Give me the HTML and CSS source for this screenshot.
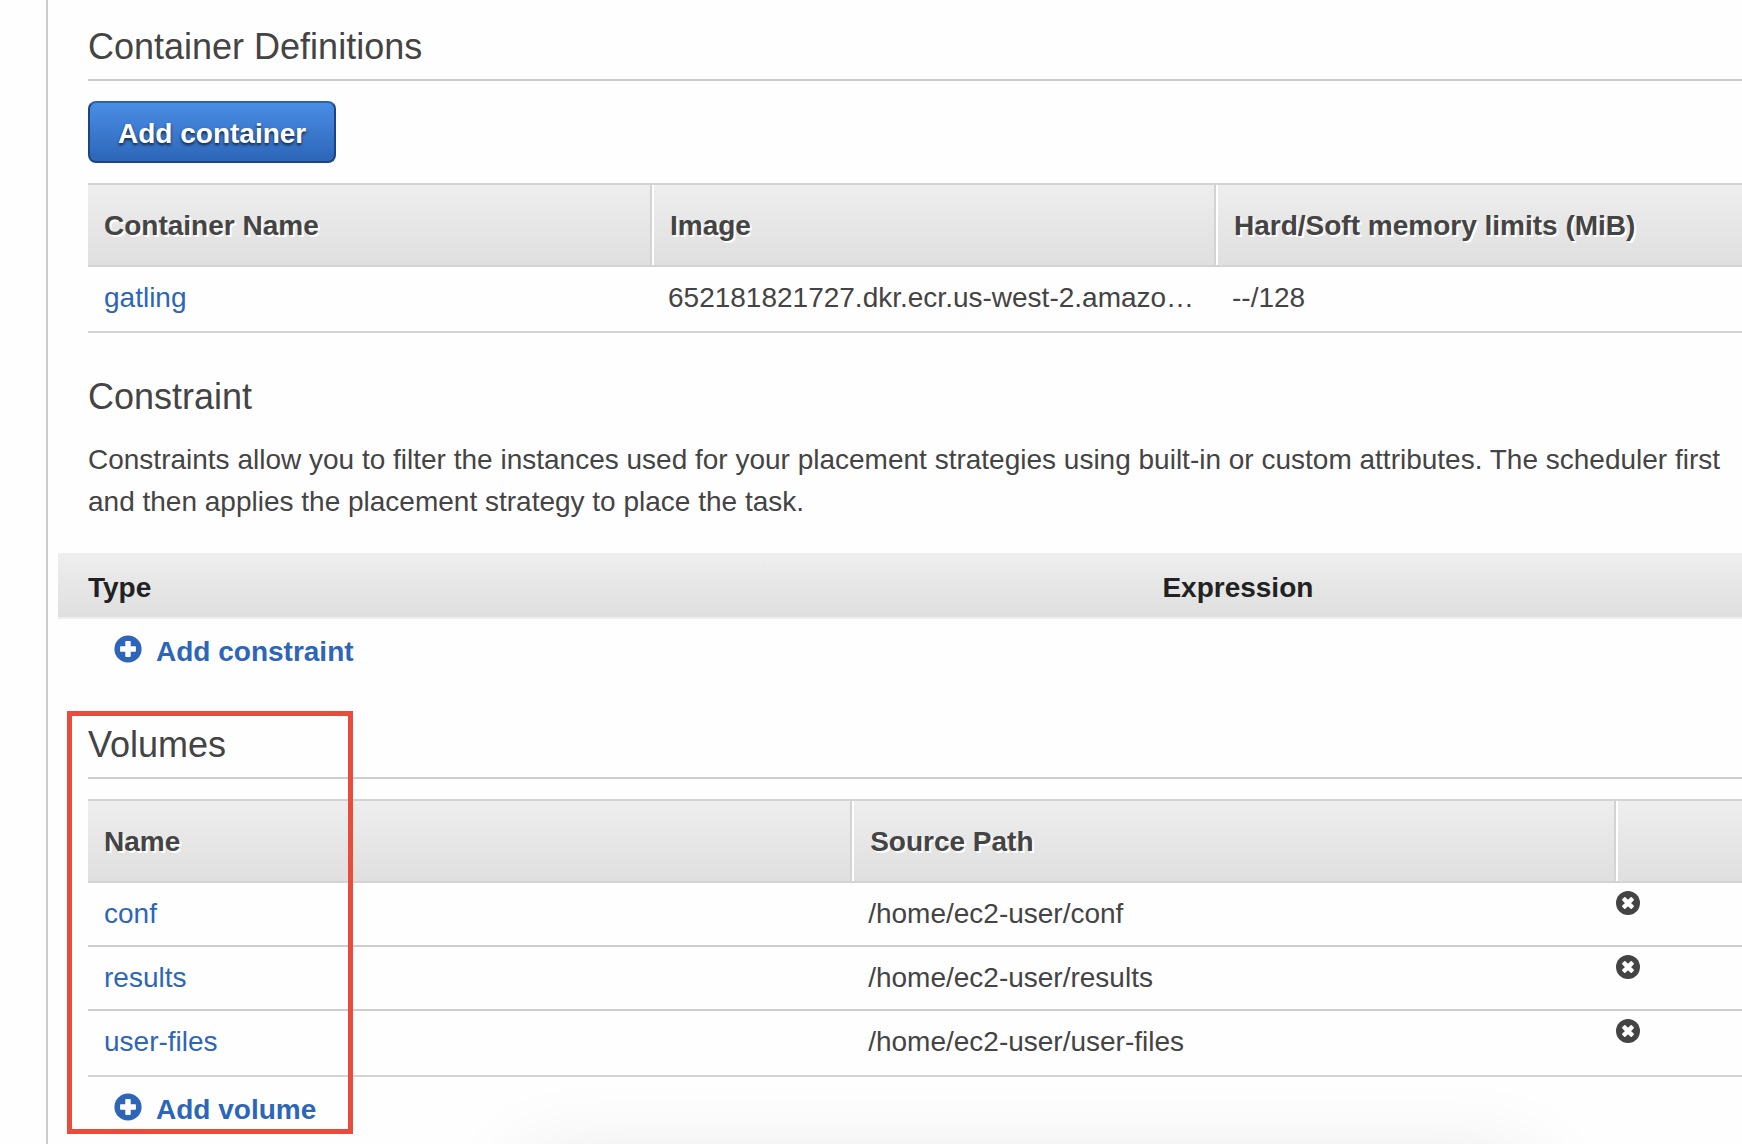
FILE: index.html
```html
<!DOCTYPE html>
<html lang="en">
<head>
<meta charset="utf-8">
<title>Task Definition</title>
<link rel="stylesheet" href="styles.css">
</head>
<body>
<svg class="sprite" aria-hidden="true">
  <symbol id="icon-plus" viewBox="0 0 28 28">
    <circle cx="14" cy="14" r="13.6" fill="currentColor"/>
    <path d="M12 6.8h4v5.2h5.2v4H16v5.2h-4V16H6.800v-4H12z" fill="#fff" stroke="#fff" stroke-width="1.4" stroke-linejoin="round"/>
  </symbol>
  <symbol id="icon-remove" viewBox="0 0 24 24">
    <circle cx="12" cy="12" r="12" fill="currentColor"/>
    <path d="M8.800 6.800l3.200 3 3.200-3 2 2-3 3.200 3 3.200-2 2-3.200-3-3.200 3-2-2 3-3.200-3-3.200z" fill="#fff" stroke="#fff" stroke-width="1.6" stroke-linejoin="round"/>
  </symbol>
</svg>
<main class="panel">
  <section>
    <h2 class="heading heading-ruled">Container Definitions</h2>
    <button type="button" class="primary">Add container</button>
    <table class="grid containers">
      <thead>
        <tr><th scope="col">Container Name</th><th scope="col">Image</th><th scope="col">Hard/Soft memory limits (MiB)</th></tr>
      </thead>
      <tbody>
        <tr><td><a href="#gatling">gatling</a></td><td>652181821727.dkr.ecr.us-west-2.amazo…</td><td>--/128</td></tr>
      </tbody>
    </table>
  </section>

  <section class="constraint">
    <h2 class="heading">Constraint</h2>
    <p class="description">Constraints allow you to filter the instances used for your placement strategies using built-in or custom attributes. The scheduler first<br>and then applies the placement strategy to place the task.</p>
    <table class="band">
      <thead>
        <tr><th scope="col">Type</th><th scope="col">Expression</th></tr>
      </thead>
    </table>
    <a class="add" href="#add-constraint"><svg class="icon-plus" aria-hidden="true"><use href="#icon-plus"/></svg>Add constraint</a>
  </section>

  <section class="volumes">
    <h2 class="heading heading-ruled">Volumes</h2>
    <table class="grid paths">
      <thead>
        <tr><th scope="col">Name</th><th scope="col">Source Path</th><th></th></tr>
      </thead>
      <tbody>
        <tr><td><a href="#conf">conf</a></td><td>/home/ec2-user/conf</td><td class="action"><button type="button" class="remove" aria-label="Remove conf"><svg aria-hidden="true"><use href="#icon-remove"/></svg></button></td></tr>
        <tr><td><a href="#results">results</a></td><td>/home/ec2-user/results</td><td class="action"><button type="button" class="remove" aria-label="Remove results"><svg aria-hidden="true"><use href="#icon-remove"/></svg></button></td></tr>
        <tr><td><a href="#user-files">user-files</a></td><td>/home/ec2-user/user-files</td><td class="action"><button type="button" class="remove" aria-label="Remove user-files"><svg aria-hidden="true"><use href="#icon-remove"/></svg></button></td></tr>
      </tbody>
    </table>
    <a class="add" href="#add-volume"><svg class="icon-plus" aria-hidden="true"><use href="#icon-plus"/></svg>Add volume</a>
    <div class="highlight"></div>
  </section>
</main>
</body>
</html>
```

FILE: styles.css
```css
* {
  box-sizing: border-box;
}

body {
  margin: 0;
  background: #fefefe;
  color: #444;
  font: 28px/42px "Liberation Sans", Arial, sans-serif;
}

/* Soft shadow of the dialog docked under the window's lower edge */
body::after {
  content: "";
  position: fixed;
  top: 100%;
  left: 30%;
  right: 12%;
  height: 200px;
  border-radius: 12px;
  box-shadow: 0 20px 90px rgba(0, 0, 0, 0.11);
}

a {
  color: #2d66b8;
  text-decoration: none;
}

.sprite {
  display: none;
}

.panel {
  min-height: 100vh;
  margin-left: 46px;
  padding: 25px 0 13px 40px;
  border-left: 2px solid #ccc;
  overflow: hidden;
}

.heading {
  margin: 0;
  font-size: 36px;
  font-weight: 400;
  line-height: 44px;
}

.heading-ruled {
  margin-bottom: 20px;
  padding-bottom: 10px;
  border-bottom: 2px solid #ccc;
}

.primary {
  display: block;
  height: 62px;
  margin-bottom: 20px;
  padding: 3px 28px 0;
  border: 2px solid #1c4481;
  border-top-color: #2a62b4;
  border-radius: 8px;
  background: linear-gradient(#4a8de5, #2d66b8);
  color: #fff;
  font: inherit;
  font-weight: 700;
  text-shadow: 0 2px 3px rgba(0, 0, 0, 0.7);
}

.grid,
.band {
  width: 100%;
  table-layout: fixed;
  border-collapse: separate;
  border-spacing: 0;
  text-align: left;
}

/* Column dividers are background strips, so they meet the borders squarely */
.grid th {
  padding: 20px 16px 18px 18px;
  border: solid #d3d3d3;
  border-width: 2px 0;
  background:
    linear-gradient(#fff, #fff) left / 2px 100% no-repeat padding-box,
    linear-gradient(#d3d3d3, #d3d3d3) right / 2px 100% no-repeat padding-box,
    linear-gradient(#eee, #dfdfdf) padding-box;
  text-shadow: 2px 2px 0 #fff;
  white-space: nowrap;
}

.grid th:first-child {
  padding-left: 16px;
  background:
    linear-gradient(#d3d3d3, #d3d3d3) right / 2px 100% no-repeat padding-box,
    linear-gradient(#eee, #dfdfdf) padding-box;
}

.grid th:last-child {
  background:
    linear-gradient(#fff, #fff) left / 2px 100% no-repeat padding-box,
    linear-gradient(#eee, #dfdfdf) padding-box;
}

.grid td {
  padding: 10px 16px;
  border-bottom: 2px solid #ccc;
  vertical-align: top;
  white-space: nowrap;
}

.grid tr:last-child td {
  padding-bottom: 12px;
  border-bottom-color: #d3d3d3;
}

.containers th:not(:last-child) {
  width: 34.1%;
}

.paths th:not(:last-child) {
  width: 46.2%;
}

.grid .action {
  padding: 8px 0 0;
}

.remove {
  display: block;
  width: 24px;
  height: 24px;
  padding: 0;
  border: 0;
  background: none;
  color: #444;
}

.remove svg {
  display: block;
  width: 24px;
  height: 24px;
}

.constraint {
  margin-top: 42px;
}

.description {
  margin: 20px 0 30px;
  white-space: nowrap;
}

.band {
  width: calc(100% + 30px);
  margin: 0 0 12px -30px;
  border-bottom: 2px solid #eee;
  background: linear-gradient(#eee, #dfdfdf) padding-box;
  color: #222;
}

.band th {
  padding: 14px 30px 8px;
}

.band th:first-child {
  width: 63.8%;
}

.add {
  display: flex;
  align-items: center;
  gap: 14px;
  width: fit-content;
  padding-left: 26px;
  font-weight: 700;
}

.icon-plus {
  width: 28px;
  height: 28px;
  margin-bottom: 6px;
}

.volumes {
  position: relative;
  margin-top: 50px;
}

.volumes .add {
  margin-top: 12px;
}

/* Callout frame drawn over the volumes list */
.highlight {
  position: absolute;
  top: -12px;
  bottom: -3px;
  left: -21px;
  width: 286px;
  border: 5px solid #e94c3d;
  pointer-events: none;
}
```
